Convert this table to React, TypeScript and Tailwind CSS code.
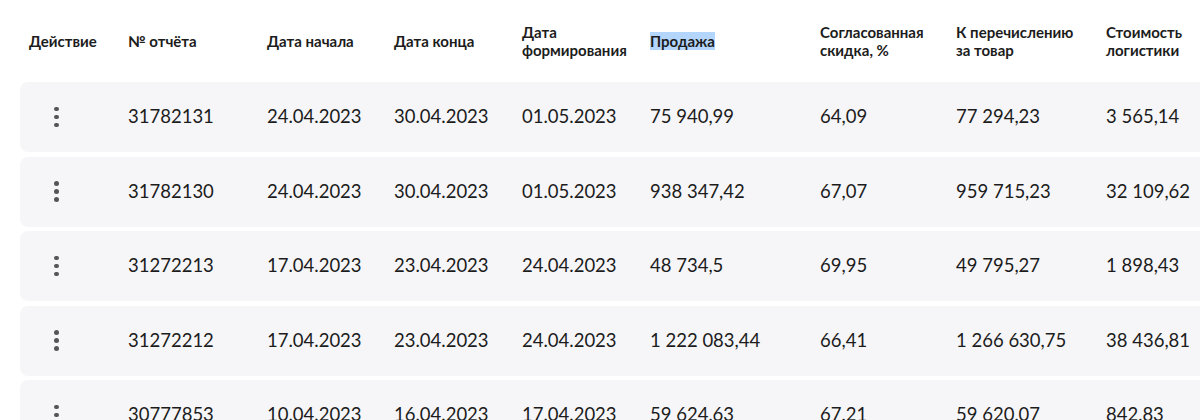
import React from "react";

const cols = [
  "w-[108px]",
  "w-[139px]",
  "w-[127px]",
  "w-[128px]",
  "w-[128px]",
  "w-[170px]",
  "w-[136px]",
  "w-[150px]",
  "w-[160px]",
];

const rows = [
  ["31782131", "24.04.2023", "30.04.2023", "01.05.2023", "75 940,99", "64,09", "77 294,23", "3 565,14"],
  ["31782130", "24.04.2023", "30.04.2023", "01.05.2023", "938 347,42", "67,07", "959 715,23", "32 109,62"],
  ["31272213", "17.04.2023", "23.04.2023", "24.04.2023", "48 734,5", "69,95", "49 795,27", "1 898,43"],
  ["31272212", "17.04.2023", "23.04.2023", "24.04.2023", "1 222 083,44", "66,41", "1 266 630,75", "38 436,81"],
  ["30777853", "10.04.2023", "16.04.2023", "17.04.2023", "59 624,63", "67,21", "59 620,07", "842,83"],
];

const Dots = () => (
  <div className="flex flex-col gap-[3.5px] w-[4.5px] ml-[34px]">
    <span className="w-[4.5px] h-[4.5px] rounded-full bg-[#555]" />
    <span className="w-[4.5px] h-[4.5px] rounded-full bg-[#555]" />
    <span className="w-[4.5px] h-[4.5px] rounded-full bg-[#555]" />
  </div>
);

const App = () => {
  return (
    <div
      className="w-full h-[420px] overflow-hidden bg-white text-[#1c1c1c] pl-5"
      style={{ fontFamily: "Lato, 'Noto Sans', sans-serif" }}
    >
      {/* Header */}
      <div className="flex items-center h-[82px] text-[15px] font-bold leading-[18px] w-[1300px]">
        <div className={`${cols[0]} pl-[9px]`}>Действие</div>
        <div className={cols[1]}>№ отчёта</div>
        <div className={cols[2]}>Дата начала</div>
        <div className={cols[3]}>Дата конца</div>
        <div className={cols[4]}>
          Дата
          <br />
          формирования
        </div>
        <div className={cols[5]}>
          <span className="bg-[#b4d6fc]">Продажа</span>
        </div>
        <div className={cols[6]}>
          Согласованная
          <br />
          скидка, %
        </div>
        <div className={cols[7]}>
          К перечислению
          <br />
          за товар
        </div>
        <div className={cols[8]}>
          Стоимость
          <br />
          логистики
        </div>
      </div>
      {/* Rows */}
      <div className="flex flex-col gap-[4.5px]">
        {rows.map((r) => (
          <div
            key={r[0]}
            className="flex items-center h-[70px] w-[1300px] rounded-lg bg-[#f6f6f8] text-[18.5px]"
          >
            <div className={cols[0]}>
              <Dots />
            </div>
            {r.map((v, i) => (
              <div key={i} className={cols[i + 1]}>
                {v}
              </div>
            ))}
          </div>
        ))}
      </div>
    </div>
  );
};

export default App;
